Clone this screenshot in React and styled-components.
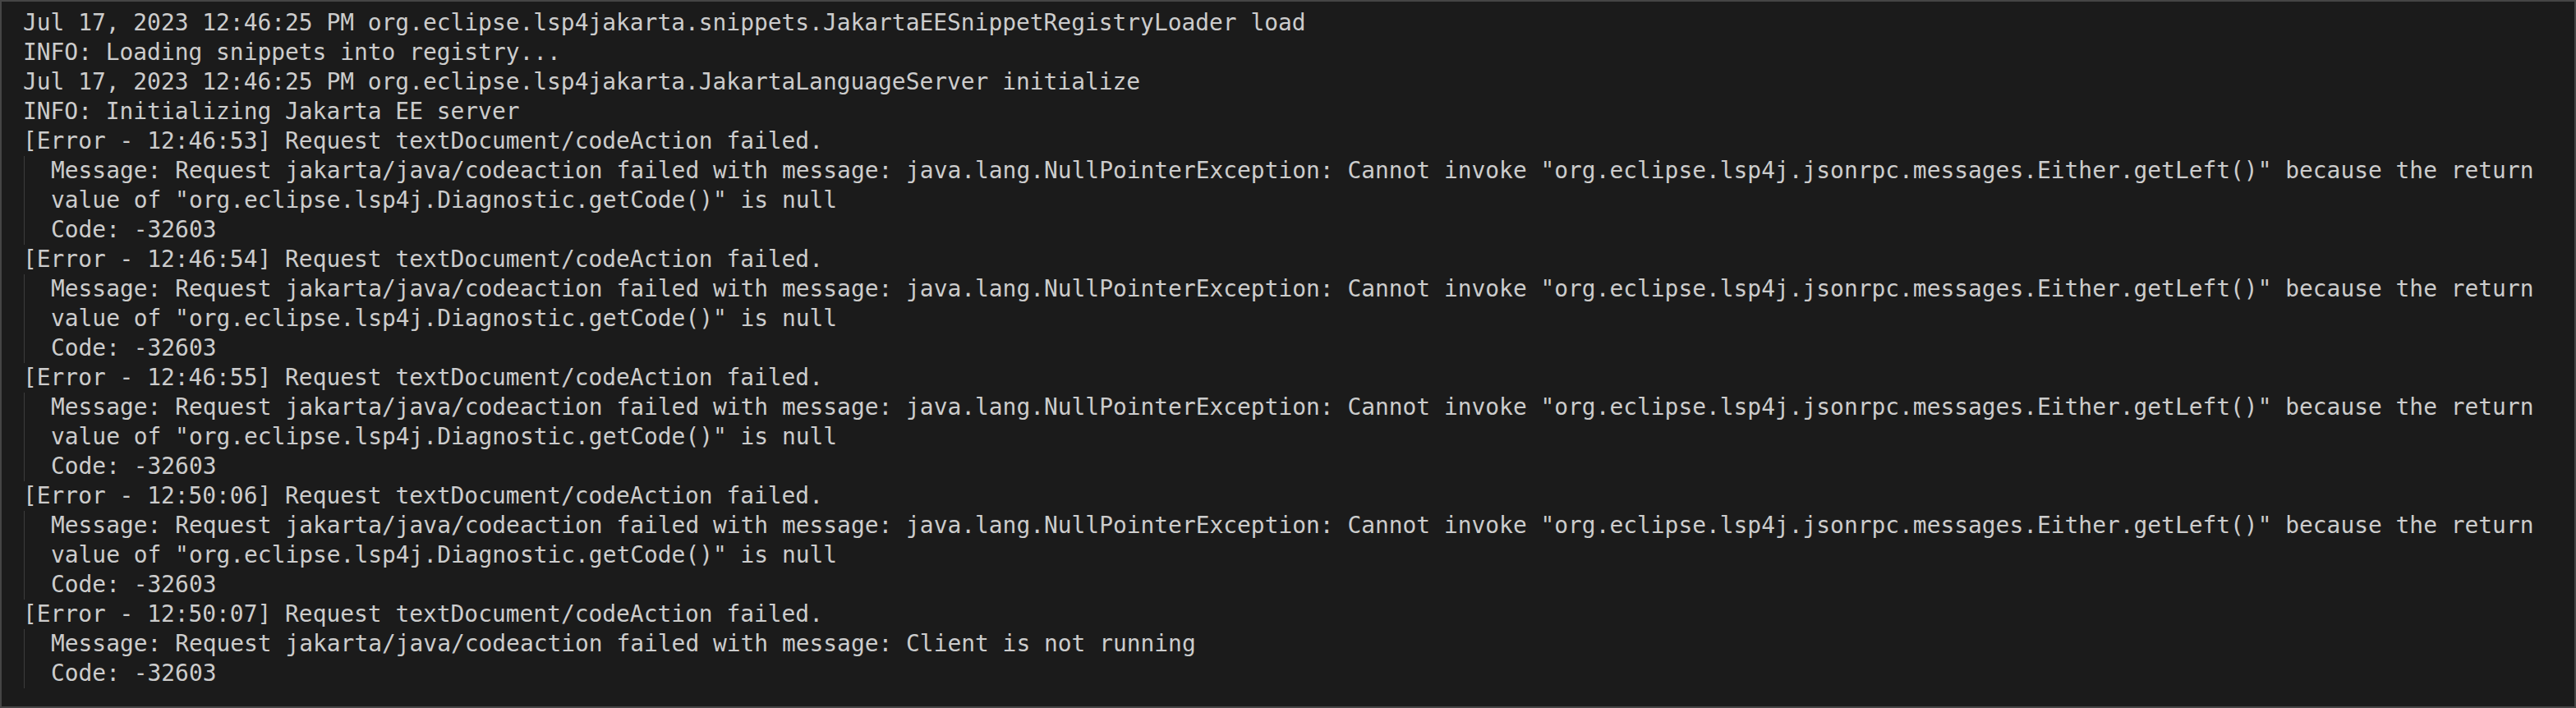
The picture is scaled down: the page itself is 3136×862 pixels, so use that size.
import styled, { createGlobalStyle } from "styled-components";

const GlobalStyle = createGlobalStyle`
  html, body {
    margin: 0;
    padding: 0;
    background: #1b1b1b;
  }
`;

const Panel = styled.div`
  position: relative;
  box-sizing: border-box;
  width: 3136px;
  height: 862px;
  border: 2px solid #454545;
  background-color: #1b1b1b;
  padding: 8px 2px 0 26px;
  overflow: hidden;
  font-family: "DejaVu Sans Mono", "Liberation Mono", monospace;
  font-size: 27.9px;
  line-height: 36px;
  color: #cccccc;

  &::before {
    content: "";
    position: absolute;
    top: -2px;
    left: 242px;
    width: 100px;
    height: 2px;
    background-color: #3b6fa3;
  }
`;

const Line = styled.div`
  white-space: pre-wrap;
  word-break: normal;
`;

const Details = styled.div`
  margin-left: 1px;
  border-left: 1px solid #3c3c3c;
  padding-left: 32px;
`;

const errors = [
  {
    time: "12:46:53",
    message:
      'Request jakarta/java/codeaction failed with message: java.lang.NullPointerException: Cannot invoke "org.eclipse.lsp4j.jsonrpc.messages.Either.getLeft()" because the return value of "org.eclipse.lsp4j.Diagnostic.getCode()" is null',
  },
  {
    time: "12:46:54",
    message:
      'Request jakarta/java/codeaction failed with message: java.lang.NullPointerException: Cannot invoke "org.eclipse.lsp4j.jsonrpc.messages.Either.getLeft()" because the return value of "org.eclipse.lsp4j.Diagnostic.getCode()" is null',
  },
  {
    time: "12:46:55",
    message:
      'Request jakarta/java/codeaction failed with message: java.lang.NullPointerException: Cannot invoke "org.eclipse.lsp4j.jsonrpc.messages.Either.getLeft()" because the return value of "org.eclipse.lsp4j.Diagnostic.getCode()" is null',
  },
  {
    time: "12:50:06",
    message:
      'Request jakarta/java/codeaction failed with message: java.lang.NullPointerException: Cannot invoke "org.eclipse.lsp4j.jsonrpc.messages.Either.getLeft()" because the return value of "org.eclipse.lsp4j.Diagnostic.getCode()" is null',
  },
  {
    time: "12:50:07",
    message:
      "Request jakarta/java/codeaction failed with message: Client is not running",
  },
];

const App = () => {
  return (
    <>
      <GlobalStyle />
      <Panel>
        <Line>
          Jul 17, 2023 12:46:25 PM
          org.eclipse.lsp4jakarta.snippets.JakartaEESnippetRegistryLoader load
        </Line>
        <Line>INFO: Loading snippets into registry...</Line>
        <Line>
          Jul 17, 2023 12:46:25 PM org.eclipse.lsp4jakarta.JakartaLanguageServer
          initialize
        </Line>
        <Line>INFO: Initializing Jakarta EE server</Line>
        {errors.map((err) => (
          <div key={err.time}>
            <Line>
              [Error - {err.time}] Request textDocument/codeAction failed.
            </Line>
            <Details>
              <Line>Message: {err.message}</Line>
              <Line>Code: -32603</Line>
            </Details>
          </div>
        ))}
      </Panel>
    </>
  );
};

export default App;
